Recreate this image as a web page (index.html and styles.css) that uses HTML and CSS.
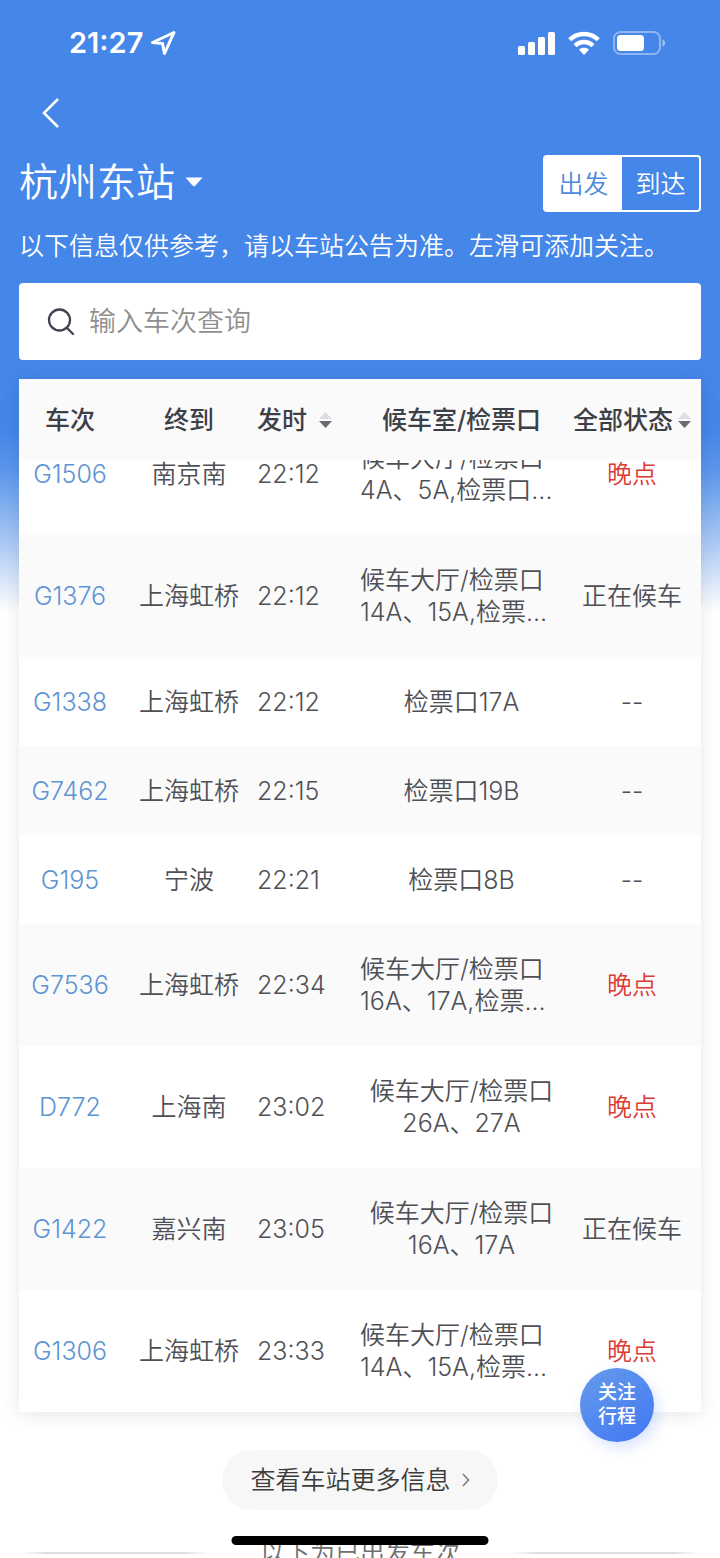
FILE: index.html
```html
<!DOCTYPE html>
<html lang="zh-CN">
<head>
<meta charset="utf-8">
<meta name="viewport" content="width=device-width, initial-scale=1">
<title>杭州东站</title>
<link rel="stylesheet" href="styles.css">
</head>
<body>
<div class="screen">
  <div class="status-bar">
    <div class="clock">
      <span>21:27</span>
      <svg width="26" height="26" viewBox="0 0 26 26" fill="none" stroke="#fff" stroke-width="3" stroke-linejoin="round"><path d="M24 2.500 2.500 12.500 12.500 13.500 14.500 23.500Z"/></svg>
    </div>
    <div class="signals">
      <svg width="38" height="24" viewBox="0 0 38 24" fill="#fff"><rect x="0" y="15" width="7" height="9" rx="1.500"/><rect x="10" y="11" width="7" height="13" rx="1.500"/><rect x="20" y="6" width="7" height="18" rx="1.500"/><rect x="30" y="1" width="7" height="23" rx="1.500"/></svg>
      <svg width="32" height="24" viewBox="0 0 32 24" fill="none" stroke="#fff" stroke-width="4.400"><path d="M1.700 8.800C9.500 1 22.500 1 30.300 8.800"/><path d="M7 14.600C12 9.700 20 9.700 25 14.600"/><path d="M16 24l-5-5.200c2.800-2.600 7.200-2.600 10 0z" fill="#fff" stroke="none"/></svg>
      <svg width="53" height="24" viewBox="0 0 53 24"><rect x="2" y="1" width="46" height="22" rx="6.500" fill="none" stroke="#fff" stroke-opacity=".4" stroke-width="2"/><rect x="5" y="4" width="27" height="16" rx="3.500" fill="#fff"/><path d="M50.500 8.500c3.500 1 3.500 6 0 7z" fill="#fff" fill-opacity=".5"/></svg>
    </div>
  </div>

  <header class="header">
    <button class="back" type="button" aria-label="返回">
      <svg width="20" height="32" viewBox="0 0 20 32" fill="none" stroke="#fff" stroke-width="2.600"><path d="M17 2 3 16 17 30"/></svg>
    </button>
    <div class="title-row">
      <button class="station" type="button">
        <span>杭州东站</span>
        <svg width="18" height="10" viewBox="0 0 18 10" fill="#fff"><path d="M.500.500h17L10.500 8.500q-1.500 1.500-3 0z"/></svg>
      </button>
      <div class="switch">
        <button class="switch-item active" type="button">出发</button>
        <button class="switch-item" type="button">到达</button>
      </div>
    </div>
    <p class="note">以下信息仅供参考，请以车站公告为准。左滑可添加关注。</p>
    <label class="search">
      <svg width="28" height="28" viewBox="0 0 28 28" fill="none" stroke="#41444f" stroke-width="2.300" stroke-linecap="round"><circle cx="12.500" cy="12" r="10.500"/><path d="M20 20 26 26"/></svg>
      <input type="text" placeholder="输入车次查询" aria-label="输入车次查询">
    </label>
  </header>

  <main class="board">
    <table class="trains">
      <thead>
        <tr>
          <th>车次</th>
          <th>终到</th>
          <th class="time"><span>发时</span><svg width="13" height="16" viewBox="0 0 13 16"><path d="M0 7 6.500 0 13 7z" fill="#dcdee1"/><path d="M0 9h13L6.500 16z" fill="#686c74"/></svg></th>
          <th>候车室/检票口</th>
          <th class="state"><span>全部状态</span><svg width="13" height="16" viewBox="0 0 13 16"><path d="M0 7 6.500 0 13 7z" fill="#dcdee1"/><path d="M0 9h13L6.500 16z" fill="#686c74"/></svg></th>
        </tr>
      </thead>
      <tbody>
        <tr class="tall"><td><a href="#">G1506</a></td><td>南京南</td><td class="time">22:12</td><td class="clipped">候车大厅/检票口<br>4A、5A,检票口...</td><td class="late">晚点</td></tr>
        <tr class="tall"><td><a href="#">G1376</a></td><td>上海虹桥</td><td class="time">22:12</td><td class="clipped">候车大厅/检票口<br>14A、15A,检票...</td><td>正在候车</td></tr>
        <tr><td><a href="#">G1338</a></td><td>上海虹桥</td><td class="time">22:12</td><td>检票口17A</td><td>--</td></tr>
        <tr><td><a href="#">G7462</a></td><td>上海虹桥</td><td class="time">22:15</td><td>检票口19B</td><td>--</td></tr>
        <tr><td><a href="#">G195</a></td><td>宁波</td><td class="time">22:21</td><td>检票口8B</td><td>--</td></tr>
        <tr class="tall"><td><a href="#">G7536</a></td><td>上海虹桥</td><td class="time">22:34</td><td class="clipped">候车大厅/检票口<br>16A、17A,检票...</td><td class="late">晚点</td></tr>
        <tr class="tall"><td><a href="#">D772</a></td><td>上海南</td><td class="time">23:02</td><td>候车大厅/检票口<br>26A、27A</td><td class="late">晚点</td></tr>
        <tr class="tall"><td><a href="#">G1422</a></td><td>嘉兴南</td><td class="time">23:05</td><td>候车大厅/检票口<br>16A、17A</td><td>正在候车</td></tr>
        <tr class="tall"><td><a href="#">G1306</a></td><td>上海虹桥</td><td class="time">23:33</td><td class="clipped">候车大厅/检票口<br>14A、15A,检票...</td><td class="late">晚点</td></tr>
      </tbody>
    </table>
    <button class="follow" type="button">关注<br>行程</button>
  </main>

  <button class="more" type="button">
    <span>查看车站更多信息</span>
    <svg width="8" height="14" viewBox="0 0 8 14" fill="none" stroke="#777" stroke-width="1.500"><path d="M1 1 6.500 7 1 13"/></svg>
  </button>

  <div class="departed"><span>以下为已出发车次</span></div>
  <div class="home-indicator"></div>
</div>
</body>
</html>
```

FILE: styles.css
```css
* {
  box-sizing: border-box;
}

body {
  margin: 0;
  background: #fff;
  color: #4f5055;
  font-family: Inter, "Noto Sans CJK SC", sans-serif;
  font-size: 25px;
  font-weight: 350;
  line-height: 32px;
}

button,
input {
  margin: 0;
  padding: 0;
  border: 0;
  background: none;
  color: inherit;
  font: inherit;
}

svg {
  display: block;
  flex: none;
}

.screen {
  position: relative;
  display: flex;
  flex-direction: column;
  height: 100vh;
  overflow: hidden;
  background: linear-gradient(#4586e9 0, #4586e9 430px, #5b96ec 470px, #b3cff6 550px, #fff 612px);
}

.status-bar {
  display: flex;
  flex: none;
  justify-content: space-between;
  padding: 27px 55px 0 69px;
}

.clock {
  display: flex;
  align-items: center;
  gap: 7px;
  color: #fff;
  font-size: 29px;
  font-weight: 600;
}

.signals {
  display: flex;
  align-items: center;
  gap: 12px;
}

.header {
  flex: none;
  padding: 38px 19px 19px;
  color: #fff;
}

.back {
  display: block;
  margin-left: 22px;
}

.title-row {
  display: flex;
  align-items: center;
  justify-content: space-between;
  margin-top: 26px;
}

.station {
  display: flex;
  align-items: center;
  gap: 10px;
  padding-bottom: 4px;
  font-size: 39px;
  line-height: 50px;
}

.switch {
  display: flex;
  overflow: hidden;
  border: 2px solid #fff;
  border-radius: 4px;
}

.switch-item {
  width: 77px;
  height: 53px;
}

.switch-item.active {
  background: #fff;
  color: #4d8adb;
}

.note {
  margin: 18px 0 21px;
  white-space: nowrap;
}

.search {
  display: flex;
  align-items: center;
  gap: 14px;
  height: 77px;
  padding: 0 28px;
  border-radius: 4px;
  background: #fff;
}

.search input {
  flex: 1;
  min-width: 0;
  outline: 0;
  color: #41444f;
  font-size: 27px;
}

.search input::placeholder {
  color: #8f8f8f;
  opacity: 1;
}

.board {
  position: relative;
  flex: none;
  margin: 0 19px;
  background: #fff;
  box-shadow: 0 2px 18px rgba(0, 0, 0, 0.1);
}

.trains,
.trains thead,
.trains tbody {
  display: block;
}

.trains tr {
  display: grid;
  grid-template-columns: 102fr 136fr 103fr 203fr 138fr;
  align-items: center;
  height: 89px;
  text-align: center;
}

.trains tr.tall {
  height: 122px;
}

.trains thead {
  position: relative;
  z-index: 1;
  background: #fafafb;
}

.trains thead tr {
  height: 81px;
}

/* The list is scrolled: its first row runs under the heading. */
.trains tbody {
  margin-top: -47px;
}

.trains tbody tr:nth-child(even) {
  background: #fafafb;
}

.trains th,
.trains td {
  padding: 0;
  white-space: nowrap;
}

.trains th {
  color: #3e4047;
  font-weight: 500;
}

.trains .time {
  text-align: left;
}

.trains th.time {
  display: flex;
  align-items: center;
  gap: 12px;
}

.trains th.state {
  display: flex;
  align-items: center;
  justify-content: center;
  gap: 5px;
}

.trains .clipped {
  text-align: left;
}

.trains a {
  color: #5d94d4;
  text-decoration: none;
}

.trains .late {
  color: #db3b34;
}

.follow {
  position: absolute;
  right: 47px;
  bottom: -30px;
  z-index: 2;
  width: 74px;
  height: 74px;
  border-radius: 50%;
  background: linear-gradient(145deg, #669bea, #4078f3);
  box-shadow: 4px 6px 14px rgba(64, 120, 243, 0.2);
  color: #fff;
  font-size: 19px;
  font-weight: 500;
  line-height: 24px;
}

.more {
  display: flex;
  flex: none;
  align-items: center;
  align-self: center;
  gap: 11px;
  height: 60px;
  margin-top: 38px;
  padding: 0 28px;
  border-radius: 30px;
  background: #f7f7f7;
  color: #3c3c3c;
}

.departed {
  display: flex;
  flex: none;
  align-items: center;
  gap: 50px;
  margin: 27px 19px 0;
  color: #6e6e6e;
}

.departed::before,
.departed::after {
  flex: 1;
  height: 2px;
  background: linear-gradient(90deg, transparent, #dcdcdc 15%, #dcdcdc 85%, transparent);
  content: "";
}

.home-indicator {
  position: absolute;
  bottom: 13px;
  left: 50%;
  width: 257px;
  height: 9px;
  border-radius: 5px;
  background: #000;
  transform: translateX(-50%);
}
```
